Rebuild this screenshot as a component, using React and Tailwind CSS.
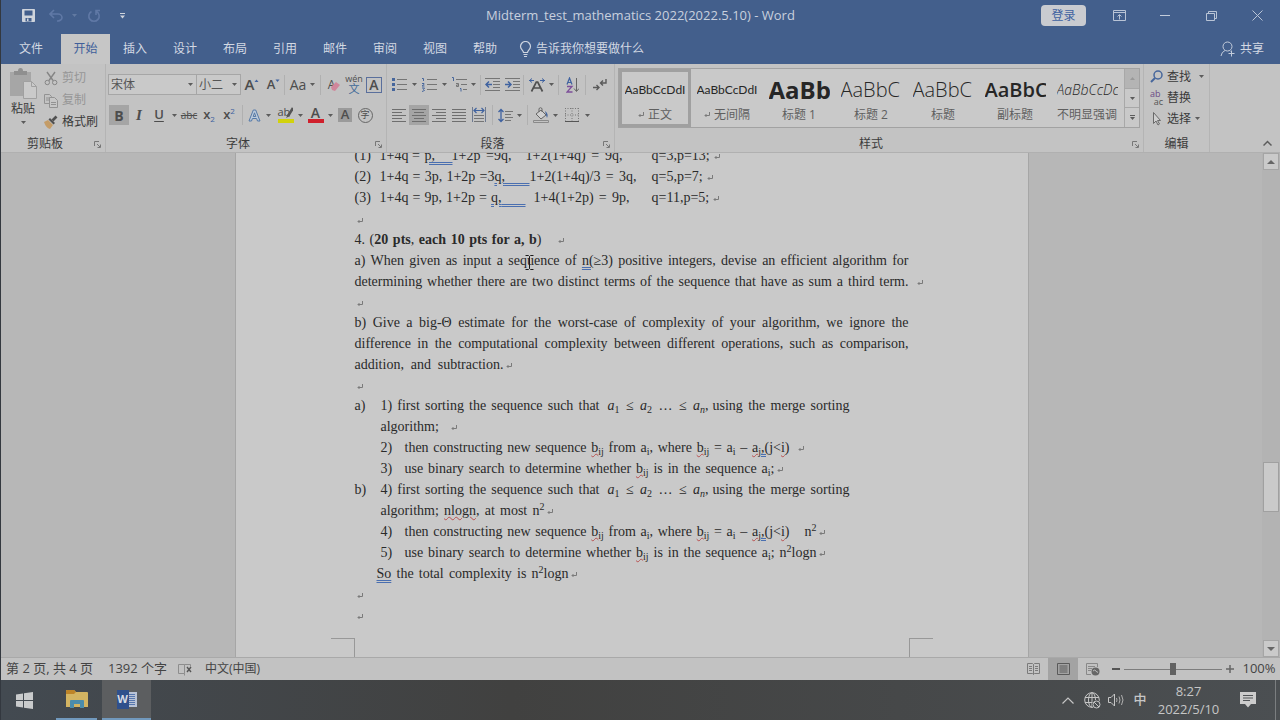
import React from "react";

const Svg = ({ w = 16, h = 16, className = "", children }) => (
  <svg width={w} height={h} viewBox={`0 0 ${w} ${h}`} fill="none" className={`block shrink-0 ${className}`} aria-hidden="true">
    {children}
  </svg>
);

const Caret = () => (
  <Svg w={5} h={3}>
    <path d="M0 0h5L2.500 3z" fill="#5c5c5c" />
  </Svg>
);

const Sep = () => <span className="h-5 w-px shrink-0 bg-[#b0b0b0]" />;

const Tool = ({ label, className = "w-5", children }) => (
  <button type="button" aria-label={label} className={`flex h-5 shrink-0 items-center justify-center ${className}`}>
    {children}
  </button>
);

const Launcher = () => (
  <button type="button" aria-label="更多选项" className="absolute right-1 bottom-1">
    <Svg w={7} h={7}>
      <path d="M0.500 5V0.500H5M3 3l3 3M6.500 3.500v3h-3" stroke="#777" />
    </Svg>
  </button>
);

const Group = ({ title, className, launcher = true, children }) => (
  <section className={`relative flex shrink-0 flex-col border-r border-[#b4b4b4] ${className}`}>
    <div className="h-[72px] shrink-0">{children}</div>
    <h2 className="text-center leading-4 text-[#3c3c3c]">{title}</h2>
    {launcher && <Launcher />}
  </section>
);

/* ---------- Title bar ---------- */

function TitleBar() {
  return (
    <div className="grid h-[31px] grid-cols-[1fr_auto_1fr] items-center">
      <div className="flex items-center pl-[15px]">
        <Tool label="保存" className="w-6">
          <Svg w={13} h={13}>
            <path d="M0.500 0.500h12v12h-12z" fill="#cfd4dc" stroke="#cfd4dc" />
            <path d="M2.500 1.500h8v5h-8zM3.500 9h6v3.500h-6z" fill="#435f8c" />
            <path d="M5 9.500h1.500V12H5z" fill="#cfd4dc" />
          </Svg>
        </Tool>
        <Tool label="撤消" className="ml-1 w-6">
          <Svg w={14} h={13}>
            <path d="M5 1L1 5l4 4M1.500 5H9a4 3.500 0 0 1 0 7H8" stroke="#6079a6" strokeWidth="1.600" />
          </Svg>
        </Tool>
        <span className="ml-1 w-3 opacity-50"><Svg w={5} h={3}><path d="M0 0h5L2.500 3z" fill="#8296b8" /></Svg></span>
        <Tool label="重复" className="w-5">
          <Svg w={14} h={14}>
            <path d="M4.500 2.500a5.200 5.200 0 1 0 5 0M9 6V1.500h4" stroke="#6079a6" strokeWidth="1.600" />
          </Svg>
        </Tool>
        <Tool label="自定义快速访问工具栏" className="ml-2 w-5">
          <Svg w={5} h={6}><path d="M0 0.500h5" stroke="#cfd4dc" /><path d="M0 2.500h5L2.500 5.500z" fill="#cfd4dc" /></Svg>
        </Tool>
      </div>
      <h1 className="text-[13px] text-[#c8d0de]">Midterm_test_mathematics 2022(2022.5.10) - Word</h1>
      <div className="flex items-center justify-end">
        <button type="button" className="mr-[10px] h-[21px] w-[45px] rounded-sm bg-[#c9cbd0] text-[#3f62a0]">登录</button>
        <Tool label="功能区显示选项" className="w-[46px]">
          <Svg w={13} h={11}>
            <path d="M0.500 0.500h12v10h-12zM0.500 2.500h12M6.500 9.500V5M4.500 6.500l2-2 2 2" stroke="#b9c4d6" />
          </Svg>
        </Tool>
        <Tool label="最小化" className="w-[46px]">
          <Svg w={10} h={1}><path d="M0 0.500h10" stroke="#c3ccdb" /></Svg>
        </Tool>
        <Tool label="向下还原" className="w-[46px]">
          <Svg w={11} h={10}><path d="M0.500 2.500h8v7h-8zM2.500 2V0.500h8v7H9" stroke="#b9c4d6" /></Svg>
        </Tool>
        <Tool label="关闭" className="w-[46px]">
          <Svg w={11} h={11}><path d="M0.500 0.500l10 10M10.500 0.500l-10 10" stroke="#b9c4d6" /></Svg>
        </Tool>
      </div>
    </div>
  );
}

function Tabs() {
  const tabs = ["插入", "设计", "布局", "引用", "邮件", "审阅", "视图", "帮助"];
  return (
    <nav className="flex h-[33px] items-stretch pt-[3px] text-[#d3d9e3]">
      <button type="button" className="w-[60px]">文件</button>
      <button type="button" className="w-[49px] bg-[#c6c6c6] text-[#3f5f9a]">开始</button>
      {tabs.map((t) => (
        <button type="button" key={t} className="w-[50px]">{t}</button>
      ))}
      <button type="button" className="ml-[9px] flex items-center gap-1">
        <Svg w={13} h={17}>
          <path d="M4.500 11.500C4.500 9.500 1.500 8.500 1.500 5.500a5 5 0 0 1 10 0c0 3-3 4-3 6zM4.500 13.500h4M5 15.500h3" stroke="#cdd4e0" strokeWidth="1.200" />
        </Svg>
        告诉我你想要做什么
      </button>
      <button type="button" className="mr-4 ml-auto flex items-center gap-1">
        <Svg w={16} h={16}>
          <circle cx="7.500" cy="5.500" r="4.500" stroke="#c3ccdb" />
          <path d="M5 9.500Q1.500 11 1 15M9.500 9.500l1 .8M11.500 9.500v6M8.500 12.500h6" stroke="#c3ccdb" />
        </Svg>
        共享
      </button>
    </nav>
  );
}

/* ---------- Ribbon ---------- */

function Clipboard() {
  return (
    <Group title="剪贴板" className="w-[105px] [&>h2]:pr-4">
      <div className="flex pt-[3px]">
        <button type="button" className="ml-2 flex w-7 flex-col items-center leading-4 text-[#3a3a3a]">
          <Svg w={28} h={34}>
            <path d="M1 5h21v24H1z" fill="#a6a6a6" />
            <path d="M5 6V4h4q0-3 2.500-3T14 4h4v4H5z" fill="#8f8f8f" />
            <path d="M14.500 14.500h8l5 5v12h-13z" fill="#cacaca" stroke="#a0a0a0" />
            <path d="M22.500 14.500v5h5" stroke="#a0a0a0" />
          </Svg>
          粘贴
          <span className="pt-1"><Caret /></span>
        </button>
        <div className="ml-[7px] flex flex-col">
          <button type="button" className="flex h-[22px] items-center gap-1 text-[#969696]">
            <Svg w={14} h={15}>
              <path d="M3 1l6 8.500M11 1L5 9.500" stroke="#858585" strokeWidth="1.400" />
              <circle cx="3.300" cy="11.500" r="2.200" stroke="#858585" /><circle cx="10.700" cy="11.500" r="2.200" stroke="#858585" />
            </Svg>
            剪切
          </button>
          <button type="button" className="flex h-[22px] items-center gap-1 text-[#969696]">
            <Svg w={14} h={15}>
              <path d="M0.500 1.500h5l2 2v7h-7zM2 5h4M2 7h3" stroke="#929292" />
              <path d="M5.500 4.500h5l3 3v7h-8z" fill="#c6c6c6" stroke="#929292" /><path d="M7 9.500h5M7 11.500h5" stroke="#929292" />
            </Svg>
            复制
          </button>
          <button type="button" className="flex h-[22px] items-center gap-1 text-[#3a3a3a]">
            <Svg w={14} h={14}>
              <path d="M0 7l4-2 5 5-3 4q-4-1-6-7z" fill="#c49c67" />
              <path d="M4.500 4.500l5 5 1.500-1.500-5-5z" fill="#505050" /><path d="M8.500 5.500L12.500 1.500" stroke="#505050" strokeWidth="2.600" />
            </Svg>
            格式刷
          </button>
        </div>
      </div>
    </Group>
  );
}

const Combo = ({ label, value, className }) => (
  <label className={`relative flex ${className}`}>
    <select aria-label={label} className="h-[21px] w-full appearance-none border border-[#a6a6a6] bg-[#c9c9c9] pl-[2px] text-[#555]">
      <option>{value}</option>
    </select>
    <span className="pointer-events-none absolute top-[9px] right-1"><Caret /></span>
  </label>
);

function FontGroup() {
  return (
    <Group title="字体" className="w-[281px] [&>h2]:pr-4">
      <div className="flex h-[41px] items-center pl-[2px]">
        <Combo label="字体" value="宋体" className="w-[89px]" />
        <Combo label="字号" value="小二" className="-ml-px w-[45px]" />
        <Tool label="增大字号" className="w-[22px]"><b className="text-[15px] font-semibold text-[#4d4d4d]">A</b><Svg w={5} h={12}><path d="M0.500 3L2.500 0.500 4.500 3z" fill="#3f62a0" /></Svg></Tool>
        <Tool label="减小字号" className="w-[21px]"><b className="text-[13px] font-semibold text-[#4d4d4d]">A</b><Svg w={5} h={12}><path d="M0.500 0.500h4L2.500 3z" fill="#3f62a0" /></Svg></Tool>
        <Sep />
        <Tool label="更改大小写" className="w-[35px] gap-1"><span className="text-[14px] text-[#4d4d4d]">Aa</span><Caret /></Tool>
        <Sep />
        <Tool label="清除所有格式" className="ml-[3px] w-5">
          <span className="-mr-1 text-[12px] text-[#4d4d4d]">A</span>
          <Svg w={9} h={12}><path d="M0 8l5-5 4 3-5 6-3-1z" fill="#d0869b" /></Svg>
        </Tool>
        <Tool label="拼音指南"><span className="flex flex-col items-center text-[9px] leading-[8px] text-[#4d4d4d]">wén<span className="text-[11px] leading-[11px] text-[#3f6a98]">文</span></span></Tool>
        <Tool label="字符边框"><span className="flex h-4 w-4 items-center justify-center border border-[#5a6f9c] text-[14px] font-semibold text-[#4d4d4d]">A</span></Tool>
      </div>
      <div className="flex h-5 items-center pl-[3px] text-[#4d4d4d]">
        <Tool label="加粗" className="w-5 bg-[#a5a5a5]"><b className="text-[14px] font-bold">B</b></Tool>
        <Tool label="倾斜"><i className="font-['Liberation_Serif',serif] text-[15px] font-bold">I</i></Tool>
        <Tool label="下划线"><u className="text-[13px] font-semibold underline-offset-2">U</u></Tool>
        <Tool label="下划线样式" className="w-[10px]"><Caret /></Tool>
        <Tool label="删除线"><s className="text-[10px]">abc</s></Tool>
        <Tool label="下标"><span className="text-[13px] font-semibold">x</span><span className="pt-2 text-[8px] text-[#3f62a0]">2</span></Tool>
        <Tool label="上标"><span className="text-[13px] font-semibold">x</span><span className="pb-2 text-[8px] text-[#3f62a0]">2</span></Tool>
        <span className="w-[3px]" />
        <Sep />
        <Tool label="文本效果" className="w-[32px] gap-[5px]">
          <Svg w={13} h={13}><path d="M1 12L5.300 1h2.400L12 12H9.500l-.9-2.500H4.400L3.500 12zM5.200 7.500h2.600L6.500 3.800z" stroke="#5579a8" fill="#bccbdc" /></Svg>
          <Caret />
        </Tool>
        <Tool label="突出显示" className="w-[30px] gap-1">
          <span className="flex flex-col">
            <span className="flex h-[11px] items-end text-[11px] leading-[12px]">ab<Svg w={7} h={11} className="-ml-1"><path d="M7 1L2 9" stroke="#555" strokeWidth="2.600" /><path d="M2 7L0 11l4-2z" fill="#555" /></Svg></span>
            <span className="mt-px h-1 w-4 bg-[#d2d20c]" />
          </span>
          <Caret />
        </Tool>
        <Tool label="字体颜色" className="w-[30px] gap-1">
          <span className="flex flex-col items-center"><span className="h-[11px] text-[14px] leading-[11px] font-semibold">A</span><span className="mt-px h-1 w-4 bg-[#d0202c]" /></span>
          <Caret />
        </Tool>
        <Tool label="字符底纹"><span className="flex h-[14px] w-[14px] items-center justify-center bg-[#9a9a9a] text-[13px] font-semibold">A</span></Tool>
        <Tool label="带圈字符"><span className="flex h-[15px] w-[15px] items-center justify-center rounded-full border border-[#666] text-[9px]">字</span></Tool>
      </div>
    </Group>
  );
}

const Lines = ({ rows, w = 14 }) => (
  <Svg w={w} h={15}>
    {rows.map(([a, b], i) => <path key={i} d={`M${a} ${1.5 + i * 3}H${b}`} stroke="#6e6e6e" />)}
  </Svg>
);

function ParagraphGroup() {
  return (
    <Group title="段落" className="w-[228px] [&>h2]:pr-4">
      <div className="flex h-[41px] items-center pl-[2px]">
        <Tool label="项目符号" className="w-[30px] gap-[5px]">
          <Svg w={15} h={15}><path d="M0 1h3v3H0zM0 6h3v3H0zM0 11h3v3H0z" fill="#46669c" /><path d="M5 2.500h10M5 7.500h10M5 12.500h10" stroke="#757575" /></Svg>
          <Caret />
        </Tool>
        <Tool label="编号" className="w-[30px] gap-[5px]">
          <Svg w={15} h={15}><path d="M0 1.500h1.500V4M0 6.500h2v1l-2 1.500h2.500M0 11h2.500l-1 1.500 1 1L0 14.500" stroke="#46669c" /><path d="M5 2.500h10M5 7.500h10M5 12.500h10" stroke="#757575" /></Svg>
          <Caret />
        </Tool>
        <Tool label="多级列表" className="w-[30px] gap-1">
          <Svg w={15} h={15}><path d="M0 0.500h1.500V4M8 11.500h1v3" stroke="#46669c" /><path d="M4 2.500h11M9 7.500h6M11 12.500h4M4 6.500h2.500v3H4.500V8h2" stroke="#757575" /></Svg>
          <Caret />
        </Tool>
        <span className="w-[2px]" />
        <Sep />
        <span className="w-[3px]" />
        <Tool label="减少缩进量">
          <Svg w={15} h={15}><path d="M0 1.500h15M8 4.500h7M8 7.500h7M8 10.500h7M0 13.500h15" stroke="#757575" /><path d="M7 7.500H1.500M4 4.500l-3 3 3 3" stroke="#3f62a0" strokeWidth="1.500" /></Svg>
        </Tool>
        <Tool label="增加缩进量">
          <Svg w={15} h={15}><path d="M0 1.500h15M8 4.500h7M8 7.500h7M8 10.500h7M0 13.500h15" stroke="#757575" /><path d="M0 7.500h5.500M3 4.500l3 3-3 3" stroke="#3f62a0" strokeWidth="1.500" /></Svg>
        </Tool>
        <span className="w-[2px]" />
        <Sep />
        <Tool label="中文版式" className="w-[34px] gap-1">
          <Svg w={16} h={14}>
            <path d="M0 2.500h5M3 .5l-2.500 2L3 4.500M11 2.500h5M13 .5l2.500 2-2.500 2" stroke="#3f62a0" />
            <path d="M2.500 13.500L7.300 4h1.400l4.800 9.500M4.500 10h7" stroke="#505050" strokeWidth="1.700" />
          </Svg>
          <Caret />
        </Tool>
        <Sep />
        <Tool label="排序" className="w-[26px]">
          <Svg w={13} h={16}>
            <path d="M1 7.500L3.500 1 6 7.500M2 5.500h3" stroke="#3f62a0" strokeWidth="1.200" />
            <path d="M1 9.500h5l-5 5.500h5.500" stroke="#7d4f9a" strokeWidth="1.300" />
            <path d="M10.500 1v13M8 11.500l2.500 3 2.500-3" stroke="#666" />
          </Svg>
        </Tool>
        <Sep />
        <Tool label="显示编辑标记" className="w-[28px]">
          <Svg w={14} h={13}>
            <path d="M13 1v4H8M10 2.500L7.500 5 10 7.500M0 9.500h5.500M3.500 7L6 9.500 3.500 12" stroke="#5a5a5a" strokeWidth="1.400" />
          </Svg>
        </Tool>
      </div>
      <div className="flex h-5 items-center pl-[2px]">
        <Tool label="左对齐"><Lines rows={[[0, 14], [0, 10], [0, 14], [0, 10], [0, 14]]} /></Tool>
        <Tool label="居中" className="w-5 bg-[#a5a5a5]"><Lines rows={[[0, 14], [2, 12], [0, 14], [2, 12], [0, 14]]} /></Tool>
        <Tool label="右对齐"><Lines rows={[[0, 14], [4, 14], [0, 14], [4, 14], [0, 14]]} /></Tool>
        <Tool label="两端对齐"><Lines rows={[[0, 14], [0, 14], [0, 14], [0, 14], [0, 14]]} /></Tool>
        <Tool label="分散对齐">
          <Svg w={14} h={16}><path d="M0.500 0v15M13.500 0v15" stroke="#6e7a90" /><path d="M2 3.500h10M4.500 1l-2.500 2.500L4.500 6M9.500 1L12 3.500 9.500 6" stroke="#3f62a0" strokeWidth="1.200" /><path d="M2 8.500h10M2 11.500h10M2 14.500h10" stroke="#757575" /></Svg>
        </Tool>
        <span className="w-[3px]" />
        <Sep />
        <Tool label="行距" className="w-[34px] gap-1">
          <Svg w={15} h={15}><path d="M3 1v13M.5 4L3 1.500 5.500 4M.5 11L3 13.500 5.500 11" stroke="#3f62a0" strokeWidth="1.300" /><path d="M7 3.500h8M7 6.500h6M7 9.500h8M7 12.500h6" stroke="#757575" /></Svg>
          <Caret />
        </Tool>
        <Sep />
        <Tool label="底纹" className="w-[35px] gap-1">
          <Svg w={16} h={16}>
            <path d="M3 7l5-4 5 5-5 4zM6 5V1.500q1.500-1.500 3 0V5" stroke="#666" fill="#d0d0d0" /><path d="M12 4q4 3 2 7l-1-3z" fill="#46669c" />
            <path d="M0.500 13.500h15v2h-15z" stroke="#8a8a8a" />
          </Svg>
          <Caret />
        </Tool>
        <Tool label="边框" className="w-[28px] gap-[6px]">
          <Svg w={14} h={14}><path d="M0 0.500h14M0.500 0v14M13.500 0v14M7 0v14M0 7h14" stroke="#777" strokeDasharray="1 1.500" /><path d="M0 13.500h14" stroke="#555" /></Svg>
          <Caret />
        </Tool>
      </div>
    </Group>
  );
}

const STYLES = [
  { name: "正文", mark: true, text: "AaBbCcDdI", cls: "text-[12px] font-['Lato',sans-serif]" },
  { name: "无间隔", mark: true, text: "AaBbCcDdI", cls: "text-[12px] font-['Lato',sans-serif]" },
  { name: "标题 1", text: "AaBb", cls: "text-[24px] font-bold" },
  { name: "标题 2", text: "AaBbC", cls: "text-[20px] font-light" },
  { name: "标题", text: "AaBbC", cls: "text-[20px] font-light" },
  { name: "副标题", text: "AaBbC", cls: "text-[20px] font-semibold" },
  { name: "不明显强调", text: "AaBbCcDc", cls: "text-[14px] italic font-light text-[#555]" },
];

function StylesGroup() {
  return (
    <Group title="样式" className="w-[529px] [&>h2]:pr-4">
      <div className="mx-[3px] mt-1 flex h-[60px] border border-[#a2a2a2] bg-[#c9c9c9]">
        {STYLES.map((s, i) => (
          <button
            type="button"
            key={s.name}
            className={`flex w-[72px] shrink-0 flex-col items-center border-[3px] ${i === 0 ? "border-[#a0a0a0]" : "border-transparent"}`}
          >
            <span className={`h-[35px] w-[61px] overflow-hidden text-left leading-[35px] whitespace-nowrap text-[#262626] ${s.cls}`}>{s.text}</span>
            <span className="flex items-center gap-1 leading-4 whitespace-nowrap text-[#5f5f5f]">
              {s.mark && <Mark />}
              {s.name}
            </span>
          </button>
        ))}
        <div className="ml-auto flex w-[15px] flex-col border-l border-[#a8a8a8]">
          <button type="button" aria-label="上一行" className="flex flex-1 items-center justify-center bg-[#b4b4b4]"><Svg w={5} h={3}><path d="M0 3h5L2.500 0z" fill="#999" /></Svg></button>
          <button type="button" aria-label="下一行" className="flex flex-1 items-center justify-center border-y border-[#a8a8a8]"><Caret /></button>
          <button type="button" aria-label="其他" className="flex flex-1 flex-col items-center justify-center gap-px"><span className="h-px w-[5px] bg-[#5c5c5c]" /><Caret /></button>
        </div>
      </div>
    </Group>
  );
}

function EditGroup() {
  const row = "flex h-[21px] items-center gap-1";
  return (
    <Group title="编辑" className="w-[66px]" launcher={false}>
      <div className="flex flex-col pt-[2px] pl-[6px] text-[#3a3a3a]">
        <button type="button" className={row}>
          <Svg w={13} h={13}><circle cx="8" cy="5" r="4" stroke="#46669c" strokeWidth="1.500" /><path d="M5 8L1 12" stroke="#46669c" strokeWidth="2" /></Svg>
          查找<span className="pl-1"><Caret /></span>
        </button>
        <button type="button" className={row}>
          <span className="flex w-[13px] flex-col text-[9px] leading-[8px]"><span className="text-left text-[#6b4a86]">ab</span><span className="text-right text-[#555]">ac</span></span>
          替换
        </button>
        <button type="button" className={row}>
          <Svg w={13} h={14}><path d="M3.500 0.500v11l2.500-2.500 2 4 1.500-1-2-3.500h3z" stroke="#6a6a6a" fill="#cfcfcf" /></Svg>
          选择<Caret />
        </button>
      </div>
    </Group>
  );
}

/* ---------- Document ---------- */

function Mark({ className = "" }) {
  return (
    <svg width="6" height="6" viewBox="0 0 6 6" fill="none" aria-hidden="true" className={`inline-block shrink-0 ${className}`}>
      <path d="M5.500 0v3.500H1M2.500 2L1 3.500 2.500 5" stroke="#7a7a7a" />
    </svg>
  );
}

const Row = ({ className = "", children }) => <p className={`flex h-[21px] items-baseline whitespace-nowrap ${className}`}>{children}</p>;
const Run = ({ className, children }) => <span className={`shrink-0 whitespace-normal [text-align-last:justify] ${className}`}>{children}</span>;
const Blank = ({ className = "h-5" }) => <p className={`flex items-center pt-1 pl-[2px] ${className}`}><Mark /></p>;
const Sub = ({ children }) => <sub className="text-[10px]">{children}</sub>;
const Sup = ({ children }) => <sup className="text-[10px]">{children}</sup>;
const Grammar = ({ children }) => <span className="whitespace-pre underline decoration-[#4a6fb0] decoration-double underline-offset-2">{children}</span>;
const Spell = ({ children }) => <span className="underline decoration-[#b8504f] decoration-wavy decoration-1 underline-offset-1">{children}</span>;
const Bij = () => <Spell>b<Sub>ij</Sub></Spell>;

const MergeLine = ({ letter, n }) => (
  <Row>
    <span className="w-[26px]">{letter})</span>
    <Run className="w-[219px]">{n}) first sorting the sequence such that</Run>
    <Run className="ml-2 w-[101px]">
      <i>a</i><Sub>1</Sub> ≤ <i>a</i><Sub>2</Sub> … ≤ <i>a</i><Sub><i>n</i></Sub>,
    </Run>
    <Run className="ml-1 w-[137px]">using the merge sorting</Run>
  </Row>
);

const ConstructLine = ({ n, children }) => (
  <Row className="pl-[26px]">
    <span className="w-6">{n})</span>
    <Run className="w-[385px]">
      then constructing new sequence <Bij /> from a<Sub>i</Sub>, where <Bij /> = a<Sub>i</Sub> – <Spell>a<Sub>j</Sub></Spell><Grammar>,(</Grammar>j&lt;<Spell>i</Spell>)
    </Run>
    {children}
  </Row>
);

function Page() {
  return (
    <article className="relative mx-auto w-[794px] border-x border-[#a6a6a6] bg-[#c9c9c9] px-[119px] font-['Liberation_Serif',serif] text-[14px] leading-[21px] text-[#2a2a2a]">
      <div className="-mt-2">
        <Row>
          <span className="w-[25px]">(1)</span>
          <span className="w-[45px] shrink-0">1+4q =</span>
          <span className="w-[27px] shrink-0"><Grammar>p,{"     "}</Grammar></span>
          <Run className="mr-[14px] w-[60px]">1+2p =9q,</Run>
          <Run className="mr-[29px] w-[97px]">1+2(1+4q) = 9q,</Run>
          q=3,p=13;<Mark className="ml-1" />
        </Row>
        <Row>
          <span className="w-[25px]">(2)</span>
          <Run className="w-[150px]">1+4q = 3p, 1+2p =3<Grammar>q,{"      "}</Grammar></Run>
          <Run className="mr-[15px] w-[107px]">1+2(1+4q)/3 = 3q,</Run>
          q=5,p=7;<Mark className="ml-1" />
        </Row>
        <Row>
          <span className="w-[25px]">(3)</span>
          <Run className="mr-2 w-[146px]">1+4q = 9p, 1+2p = <Grammar>q,{"      "}</Grammar></Run>
          <Run className="mr-[22px] w-[96px]">1+4(1+2p) = 9p,</Run>
          q=11,p=5;<Mark className="ml-1" />
        </Row>
        <Blank className="h-[21px]" />
        <Row>
          <Run className="w-[187px]">4. (<b>20 pts</b>, <b>each 10 pts for a, b</b>)</Run>
          <Mark className="ml-4" />
        </Row>
        <div className="relative">
          <Row><Run className="w-[554px]">a) When given as input a sequence of <Grammar>n(</Grammar>≥3) positive integers, devise an efficient algorithm for</Run></Row>
          <Row>
            <Run className="w-[554px]">determining whether there are two distinct terms of the sequence that have as sum a third term.</Run>
            <Mark className="ml-2" />
          </Row>
          <svg width="9" height="15" viewBox="0 0 9 15" fill="none" className="absolute top-[5px] left-[170px]" aria-hidden="true">
            <path d="M0.500 0.500H3.500L4.500 1.500L5.500 0.500H8.500M4.500 1.500V13.500M0.500 14.500H3.500L4.500 13.500L5.500 14.500H8.500" stroke="#1c1c1c" />
          </svg>
        </div>
        <Blank />
        <Row><Run className="w-[554px]">b) Give a big-Θ estimate for the worst-case of complexity of your algorithm, we ignore the</Run></Row>
        <Row><Run className="w-[554px]">difference in the computational complexity between different operations, such as comparison,</Run></Row>
        <Row><Run className="w-[149px]">addition, and subtraction.</Run><Mark className="ml-[2px]" /></Row>
        <Blank />
        <MergeLine letter="a" n="1" />
        <Row className="pl-[26px]">algorithm;<Mark className="ml-3" /></Row>
        <ConstructLine n="2"><Mark className="ml-2" /></ConstructLine>
        <Row className="pl-[26px]">
          <span className="w-6">3)</span>
          <Run className="w-[370px]">use binary search to determine whether <Bij /> is in the sequence a<Sub>i</Sub>;</Run>
          <Mark className="ml-[2px]" />
        </Row>
        <MergeLine letter="b" n="4" />
        <Row className="pl-[26px]">
          <Run className="w-[164px]">algorithm; <Spell>nlogn</Spell>, at most n<Sup>2</Sup></Run>
          <Mark className="ml-[2px]" />
        </Row>
        <ConstructLine n="4"><span className="ml-[15px]">n<Sup>2</Sup></span><Mark className="ml-[2px]" /></ConstructLine>
        <Row className="pl-[26px]">
          <span className="w-6">5)</span>
          <Run className="w-[412px]">use binary search to determine whether <Bij /> is in the sequence a<Sub>i</Sub>; n<Sup>2</Sup>logn</Run>
          <Mark className="ml-[2px]" />
        </Row>
        <Row className="pl-[22px]">
          <Run className="w-[192px]"><Grammar>So</Grammar> the total complexity is n<Sup>2</Sup>logn</Run>
          <Mark className="ml-[2px]" />
        </Row>
        <Blank />
        <Blank className="h-[21px]" />
      </div>
      <div className="-mx-6 mt-[13px] flex justify-between">
        <span className="h-8 w-6 border-t border-r border-[#989898]" />
        <span className="h-8 w-6 border-t border-l border-[#989898]" />
      </div>
    </article>
  );
}

function ScrollBar() {
  const btn = "flex h-[17px] w-4 shrink-0 items-center justify-center border border-[#a5a5a5] bg-[#cacaca]";
  return (
    <div className="flex w-[18px] shrink-0 flex-col items-center bg-[#b3b3b3]">
      <button type="button" aria-label="向上滚动" className={btn}><Svg w={8} h={4}><path d="M0 4h8L4 0z" fill="#666" /></Svg></button>
      <div className="grow-[293]" />
      <div className="h-[50px] w-4 shrink-0 border border-[#a0a0a0] bg-[#cacaca]" />
      <div className="grow-[128]" />
      <button type="button" aria-label="向下滚动" className={btn}><Svg w={8} h={4}><path d="M0 0h8L4 4z" fill="#666" /></Svg></button>
    </div>
  );
}

/* ---------- Status bar and taskbar ---------- */

function StatusBar() {
  return (
    <footer className="flex h-[23px] shrink-0 items-center border-t border-[#a9a9a9] bg-[#c2c2c2] pl-[5px] text-[#444]">
      <span className="w-[102px] text-[13px]">第 2 页, 共 4 页</span>
      <span className="w-[70px] text-[13px]">1392 个字</span>
      <Svg w={15} h={13} className="mr-3">
        <path d="M0.500 1.500h6v9h-6zM6.500 1.500h6v2M6.500 10.500v2" stroke="#8d8d8d" /><path d="M9 4l4 5M13 4L9 9" stroke="#555" strokeWidth="1.400" />
      </Svg>
      <span className="text-[12px]">中文(中国)</span>
      <div className="ml-auto flex h-full items-center">
        <Tool label="阅读视图" className="w-[29px]">
          <Svg w={13} h={12}><path d="M0.500 0.500h5l1 1 1-1h5v10h-5l-1 1-1-1h-5zM6.500 1.500v10M2 3.500h3M2 5.500h3M2 7.500h3M8 3.500h3M8 5.500h3M8 7.500h3" stroke="#7a7a7a" /></Svg>
        </Tool>
        <button type="button" aria-label="页面视图" className="flex h-full w-[30px] items-center justify-center bg-[#a3a3a3]">
          <Svg w={13} h={12}><path d="M0.500 0.500h12v11h-12zM2.500 3h8M2.500 5h8M2.500 7h8M2.500 9h8" stroke="#5a5a5a" /></Svg>
        </button>
        <Tool label="Web 版式视图" className="w-[30px]">
          <Svg w={14} h={13}><path d="M5 11.500H0.500v-11h11V4M2 3.500h7M2 5.500h4M2 7.500h3" stroke="#888" /><circle cx="9.500" cy="8.500" r="4" fill="#666" /><path d="M7 8q2-2 3 0t2 1" stroke="#bbb" /></Svg>
        </Tool>
        <Tool label="缩小" className="w-4"><Svg w={8} h={2}><path d="M0 1h8" stroke="#555" strokeWidth="2" /></Svg></Tool>
        <input
          type="range" aria-label="缩放" min="0" max="100" defaultValue="50"
          className="h-4 w-[98px] appearance-none bg-transparent [&::-webkit-slider-runnable-track]:h-px [&::-webkit-slider-runnable-track]:bg-[#7d7d7d] [&::-webkit-slider-thumb]:-mt-[6px] [&::-webkit-slider-thumb]:h-3 [&::-webkit-slider-thumb]:w-[6px] [&::-webkit-slider-thumb]:appearance-none [&::-webkit-slider-thumb]:bg-[#626262]"
        />
        <Tool label="放大" className="w-4"><Svg w={8} h={8}><path d="M0 4h8M4 0v8" stroke="#666" strokeWidth="1.500" /></Svg></Tool>
        <button type="button" className="w-[42px] text-center text-[13px]">100%</button>
      </div>
    </footer>
  );
}

function TaskBar() {
  return (
    <div className="flex h-10 shrink-0 items-stretch bg-linear-to-r from-[#434a51] via-[#414140] via-40% to-[#4b4f52] text-[#c6c6c6]">
      <button type="button" aria-label="开始" className="flex w-[47px] items-center justify-center">
        <Svg w={17} h={17}><path d="M0 2.500L7 1.500V8H0zM8 1.300L17 0v8H8zM0 9h7v6.500L0 14.500zM8 9h9v8l-9-1.300z" fill="#c9cbcc" /></Svg>
      </button>
      <button type="button" aria-label="文件资源管理器" className="ml-2 flex w-[41px] items-center justify-center border-b-2 border-[#7199bd]">
        <Svg w={22} h={18}>
          <path d="M0 1q0-1 1-1h7l2 2h11q1 0 1 1v14H0z" fill="#d3b462" /><path d="M0 1q0-1 1-1h7l2 2-2 2H0z" fill="#bd8428" />
          <path d="M4 18v-7q0-1 1-1h12q1 0 1 1v7h-4v-4H8v4z" fill="#4b8cab" />
        </Svg>
      </button>
      <button type="button" aria-label="Word" className="ml-[5px] flex w-[49px] items-center justify-center border-b-2 border-[#7199bd] bg-[#5c5e60]">
        <span className="flex items-center">
          <span className="flex h-[19px] w-3 items-center justify-center bg-[#30508c] text-[11px] font-bold text-[#d8dce4]">W</span>
          <Svg w={8} h={15}><path d="M0 0h8v15H0z" fill="#b9c3d6" /><path d="M0 2.500h6M0 4.500h6M0 6.500h6M0 8.500h6M0 10.500h6M0 12.500h6" stroke="#5777ae" /></Svg>
        </span>
      </button>
      <div className="ml-auto flex items-center">
        <Tool label="显示隐藏的图标" className="w-6"><Svg w={12} h={7}><path d="M0.500 6.500L6 1l5.500 5.500" stroke="#c6c6c6" strokeWidth="1.200" /></Svg></Tool>
        <Tool label="网络" className="w-6">
          <Svg w={17} h={17}>
            <circle cx="8" cy="8" r="7.300" stroke="#c6c6c6" /><ellipse cx="8" cy="8" rx="3.500" ry="7.300" stroke="#c6c6c6" /><path d="M1 5.500h14M1 10.500h14M8 1v14" stroke="#c6c6c6" />
            <circle cx="12.500" cy="12.500" r="4.500" fill="#4a4e51" /><circle cx="12.500" cy="12.500" r="3.500" stroke="#c6c6c6" /><path d="M10 10l5 5" stroke="#c6c6c6" />
          </Svg>
        </Tool>
        <Tool label="音量" className="w-6">
          <Svg w={16} h={14}><path d="M0.500 4.500h2.500L6.500 1v12L3 9.500H0.500z" stroke="#c6c6c6" /><path d="M8.500 5q1 2 0 4M11 3.500q2 3.500 0 7M13.500 2q3 5 0 10" stroke="#b0b0b0" /></Svg>
        </Tool>
        <button type="button" className="w-6 text-[13px] font-medium">中</button>
        <button type="button" className="flex w-[73px] flex-col items-center text-[13px] leading-[18px]"><span>8:27</span><span>2022/5/10</span></button>
        <Tool label="通知" className="w-[45px]">
          <Svg w={16} h={16}><path d="M0 0h16v12h-5l-3 3.500L5 12H0z" fill="#cccccc" /><path d="M3 3.500h10M3 6h10M3 8.500h7" stroke="#515457" /></Svg>
        </Tool>
        <span className="mr-1 ml-[5px] h-10 w-px bg-[#7b7e80]" />
      </div>
    </div>
  );
}

export default function App() {
  return (
    <div className="flex h-screen flex-col overflow-hidden border-l border-[#33383f] bg-[#b7b7b7] font-['Open_Sans','Noto_Sans_CJK_SC',sans-serif] text-[12px]">
      <header className="shrink-0 bg-[#435f8c]">
        <TitleBar />
        <Tabs />
      </header>
      <div className="flex h-[89px] shrink-0 border-b border-[#b0b0b0] bg-[#c3c3c3]">
        <Clipboard />
        <FontGroup />
        <ParagraphGroup />
        <StylesGroup />
        <EditGroup />
        <button type="button" aria-label="折叠功能区" className="mt-auto mr-2 mb-[6px] ml-auto"><Svg w={9} h={6}><path d="M0.500 5.500l4-4 4 4" stroke="#5c5c5c" strokeWidth="1.500" /></Svg></button>
      </div>
      <main className="flex min-h-0 flex-1">
        <div className="min-w-0 flex-1 overflow-hidden"><Page /></div>
        <ScrollBar />
      </main>
      <StatusBar />
      <TaskBar />
    </div>
  );
}
